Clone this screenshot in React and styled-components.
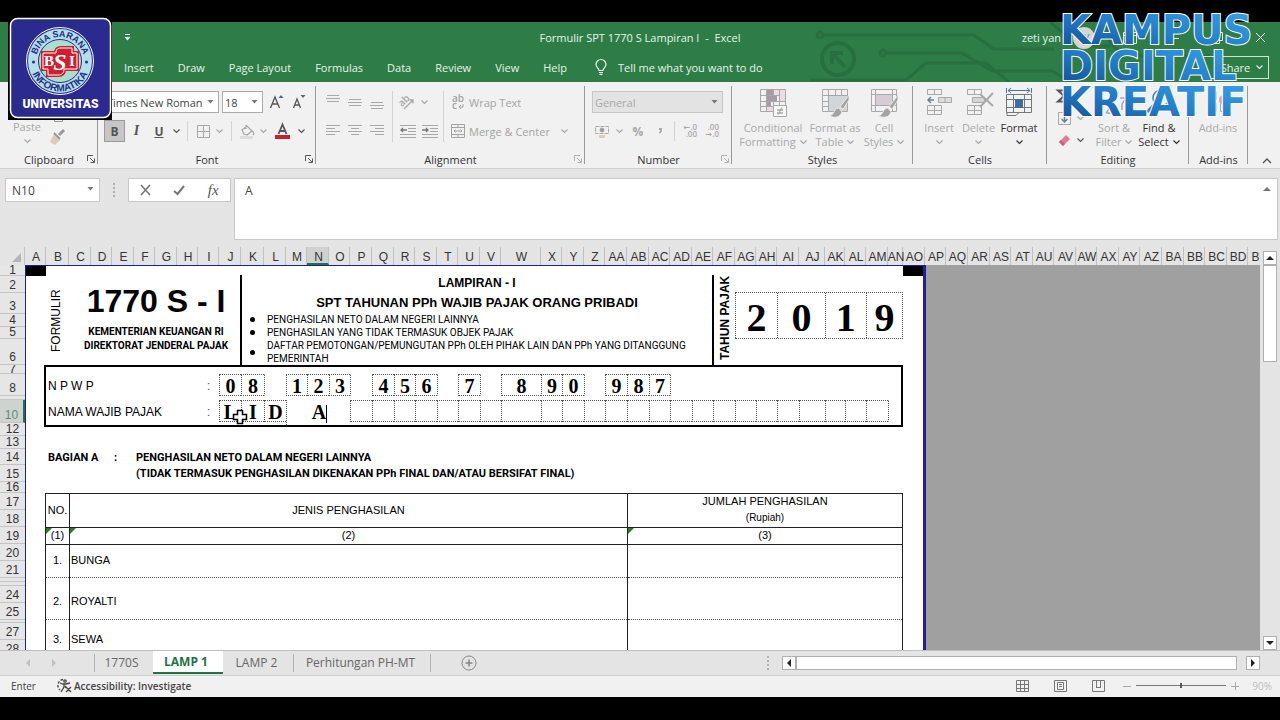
import React from "react";
import styled, { createGlobalStyle, css } from "styled-components";

const UI = `"Open Sans", "Noto Sans", sans-serif`;
const ARIAL = `"Liberation Sans", Arial, sans-serif`;
const SERIF = `"Liberation Serif", "Times New Roman", serif`;

const GlobalStyle = createGlobalStyle`
  *, *::before, *::after { box-sizing: border-box; }
  body { margin: 0; background: #000; font-family: ${UI}; font-size: 11px; color: #444; }
  button, input, select, textarea { font: inherit; color: inherit; margin: 0; }
  h1, h2, p, ul { margin: 0; padding: 0; }
`;

/* ---------- frame ---------- */
const Screen = styled.div`
  position: relative;
  display: flex;
  flex-direction: column;
  height: 100vh;
  padding: 22px 0 23px;
  background: #000;
  overflow: hidden;
`;
const plainButton = css`
  display: inline-flex;
  align-items: center;
  justify-content: center;
  padding: 0;
  border: 0;
  background: none;
`;
const IconButton = styled.button`
  ${plainButton}
  flex: none;
  width: ${(p) => p.$w || 22}px;
  height: 22px;
  color: ${(p) => (p.$on ? "#555" : "#a8a8a8")};
  font-size: 12px;
  ${(p) => p.$pressed && "background: #c6c6c6; border: 1px solid #9a9a9a;"}
`;

/* ---------- title bar ---------- */
const Header = styled.header`
  position: relative;
  flex: none;
  height: 60px;
  background: #2e7d47;
  color: #e6f3ea;
  overflow: hidden;
`;
const Circuit = styled.svg`
  position: absolute;
  top: 0;
  right: 0;
`;
const TitleBar = styled.div`
  position: relative;
  display: grid;
  grid-template-columns: 1fr auto 1fr;
  align-items: center;
  height: 31px;
`;
const QuickAccess = styled.div`
  padding-left: 116px;
`;
const QuickButton = styled(IconButton)`
  color: #e6f3ea;
`;
const DocTitle = styled.h1`
  font-size: 11px;
  font-weight: 400;
  white-space: pre;
`;
const Account = styled.div`
  display: flex;
  align-items: center;
  justify-content: flex-end;
  gap: 32px;
  padding-right: 14px;
`;
const Avatar = styled.span`
  flex: none;
  width: 22px;
  height: 22px;
  margin: 0 -4px 0 -20px;
  border-radius: 50%;
  background: #d5d5d5;
  color: #777;
  font-size: 10px;
  line-height: 22px;
  text-align: center;
`;
const TabBar = styled.nav`
  position: relative;
  display: flex;
  align-items: center;
  gap: 24px;
  height: 28px;
  padding: 0 11px 0 124px;
`;
const RibbonTab = styled.button`
  ${plainButton}
  white-space: nowrap;
`;
const TellMe = styled.button`
  ${plainButton}
  gap: 11px;
  margin-left: 4px;
  white-space: nowrap;
`;
const ShareButton = styled.button`
  ${plainButton}
  gap: 6px;
  width: 68px;
  height: 23px;
  padding-left: 14px;
  margin-left: auto;
  border: 1px solid #cfe5d6;
`;

/* ---------- ribbon ---------- */
const Ribbon = styled.section`
  display: flex;
  flex: none;
  height: 87px;
  background: #f1f1f1;
  border-bottom: 1px solid #d0d0d0;
`;
const Group = styled.div`
  position: relative;
  display: flex;
  flex: none;
  flex-direction: column;
  width: ${(p) => p.$w}px;
  &::after {
    content: "";
    position: absolute;
    top: 4px;
    bottom: 4px;
    right: 0;
    width: 1px;
    background: #999;
  }
`;
const GroupBody = styled.div`
  display: flex;
  height: 69px;
  padding: ${(p) => p.$pad || "9px 0 0 6px"};
`;
const GroupLabel = styled.div`
  position: relative;
  display: flex;
  align-items: center;
  justify-content: center;
  height: 16px;
  padding: 0 ${(p) => (p.$launch ? 18 : 0)}px;
  color: #333;
`;
const Launcher = styled.button`
  ${plainButton}
  position: absolute;
  right: 3px;
  top: 4px;
  color: ${(p) => (p.$on ? "#555" : "#b0b0b0")};
`;
const Stack = styled.div`
  display: flex;
  flex-direction: column;
  gap: ${(p) => (p.$tight ? 0 : 7)}px;
`;
const Row = styled.div`
  display: flex;
  align-items: center;
  gap: ${(p) => p.$gap || 0}px;
  height: 22px;
`;
const Sep = styled.span`
  flex: none;
  width: 1px;
  height: ${(p) => p.$h || 20}px;
  margin: 0 ${(p) => p.$m || 5}px;
  background: #d2d2d2;
`;
const SelectBox = styled.span`
  position: relative;
  display: inline-flex;
  width: ${(p) => p.$w}px;
  height: 22px;
  svg { position: absolute; right: 5px; top: 9px; pointer-events: none; }
`;
const Select = styled.select`
  appearance: none;
  width: 100%;
  padding: 0 2px;
  border: 1px solid ${(p) => (p.disabled ? "#c6c6c6" : "#ababab")};
  border-radius: 0;
  background: ${(p) => (p.disabled ? "#e3e3e3" : "#fff")};
  color: ${(p) => (p.disabled ? "#a8a8a8" : "#444")};
  opacity: 1;
`;
const TextTool = styled.button`
  ${plainButton}
  height: 22px;
  color: #a3a3a3;
  white-space: nowrap;
`;
const ToolIcon = styled.span`
  display: inline-flex;
  justify-content: center;
  width: 23px;
`;
const Big = styled.button`
  ${plainButton}
  flex: none;
  flex-direction: column;
  justify-content: flex-start;
  width: ${(p) => p.$w}px;
  padding-top: ${(p) => p.$top || 0}px;
  color: ${(p) => (p.$on ? "#333" : "#a8a8a8")};
  line-height: 14px;
  white-space: nowrap;
  > svg { flex: none; margin-bottom: 4px; }
`;
const BigLine = styled.span`
  display: inline-flex;
  align-items: center;
  justify-content: center;
  gap: 4px;
  min-height: 14px;
`;
const PasteColumn = styled.div`
  display: flex;
  align-items: flex-end;
  gap: 3px;
  padding: 0 0 3px 8px;
`;
const RibbonEnd = styled.div`
  display: flex;
  flex: 1;
  align-items: flex-end;
  justify-content: flex-end;
  padding: 0 7px 1px 0;
`;
const Collapse = styled(IconButton)`
  height: 12px;
`;
const Italic = styled.i`
  font: italic 700 14px ${SERIF};
`;
const FxLabel = styled.i`
  font: italic 400 15px ${SERIF};
`;

/* ---------- formula bar ---------- */
const FormulaBar = styled.section`
  display: flex;
  flex: none;
  align-items: flex-start;
  height: 78px;
  padding: 9px 2px 0 5px;
  background: #e4e4e4;
  font-size: 12px;
`;
const NameBox = styled.label`
  position: relative;
  display: flex;
  width: 95px;
  height: 24px;
  svg { position: absolute; right: 6px; top: 9px; }
`;
const NameInput = styled.input`
  width: 100%;
  padding: 0 6px;
  border: 1px solid #c8c8c8;
  background: #fff;
`;
const Dots = styled.span`
  width: 3px;
  height: 14px;
  margin: ${(p) => p.$m || "5px 12px 0 13px"};
  border-left: 2px dotted #b0b0b0;
`;
const FormulaButtons = styled.div`
  display: flex;
  align-items: center;
  justify-content: space-around;
  width: 103px;
  height: 24px;
  margin-right: 3px;
  border: 1px solid #c8c8c8;
  background: #fff;
`;
const FormulaInput = styled.textarea`
  flex: 1;
  height: 62px;
  padding: 3px 10px;
  border: 1px solid #c8c8c8;
  border-radius: 0;
  background: #fff;
  line-height: 17px;
  resize: none;
`;
const FormulaField = styled.label`
  position: relative;
  display: flex;
  flex: 1;
  svg { position: absolute; right: 6px; top: 9px; }
`;

/* ---------- workbook ---------- */
const Workbook = styled.main`
  display: flex;
  flex: 1;
  min-height: 0;
  background: #e4e4e4;
`;
const Pane = styled.div`
  display: flex;
  flex: 1;
  flex-direction: column;
  min-width: 0;
`;
const ColumnHeads = styled.div`
  display: flex;
  flex: none;
  height: 18px;
  overflow: hidden;
  font: 12px ${ARIAL};
  color: #333;
`;
const Corner = styled.span`
  display: flex;
  flex: none;
  align-items: flex-end;
  justify-content: flex-end;
  width: 25px;
  padding: 0 3px 3px 0;
  border-right: 1px solid #c4c4c4;
`;
const ColumnHead = styled.span`
  display: flex;
  flex: none;
  justify-content: center;
  width: ${(p) => p.$w}px;
  padding-left: 2px;
  border-right: 1px solid #c0c0c0;
  border-bottom: ${(p) => (p.$on ? "2px solid #217346" : "0")};
  background: ${(p) => (p.$on ? "#cfd3d0" : "transparent")};
  line-height: 20px;
  white-space: nowrap;
`;
const Viewport = styled.div`
  display: flex;
  flex: 1;
  align-items: flex-start;
  min-height: 0;
  overflow: hidden;
  background: #a0a0a0;
`;
const RowHeads = styled.div`
  flex: none;
  width: 25px;
  background: #e6e6e6;
  font: 12px ${ARIAL};
  color: #333;
`;
const RowHead = styled.div`
  display: flex;
  align-items: flex-end;
  justify-content: center;
  height: ${(p) => p.$h}px;
  border-bottom: 1px solid #c4c4c4;
  border-right: ${(p) => (p.$on ? "2px solid #217346" : "0")};
  background: ${(p) => (p.$on ? "#cfd3d0" : "transparent")};
  color: ${(p) => (p.$on ? "#5f8a70" : "inherit")};
  line-height: ${(p) => Math.min(14, p.$h - 1)}px;
  overflow: hidden;
`;
const Paper = styled.div`
  flex: none;
  width: 901px;
  border: solid #1f1f9c;
  border-width: 1px 3px 0 1px;
  background: #fff;
  color: #000;
  font-family: ${ARIAL};
`;
const Marks = styled.div`
  display: flex;
  justify-content: space-between;
  height: 9px;
  &::before, &::after { content: ""; width: 20px; height: 10px; background: #000; }
`;
const PaperBody = styled.div`
  margin: 0 20px 0 18px;
`;
const FormHeader = styled.div`
  display: grid;
  grid-template-columns: 196px 472px 1fr;
  height: 90px;
`;
const FormCode = styled.div`
  display: grid;
  grid-template-columns: 24px 1fr;
  text-align: center;
`;
const Vertical = styled.span`
  display: flex;
  align-items: center;
  justify-content: center;
  padding-bottom: ${(p) => (p.$bold ? 0 : 1)}px;
  padding-top: ${(p) => (p.$bold ? 4 : 0)}px;
  writing-mode: vertical-rl;
  transform: rotate(180deg);
  font-size: ${(p) => p.$fs}px;
  font-weight: ${(p) => (p.$bold ? 700 : 400)};
`;
const CodeText = styled.div`
  padding: 8px 0 0 4px;
  font: 700 10px/14px Roboto, ${ARIAL};
  white-space: nowrap;
`;
const CodeNumber = styled.div`
  margin-bottom: 6px;
  font: 700 32px/36px ${ARIAL};
`;
const FormTitle = styled.div`
  border-left: 2px solid #000;
`;
const TitleLine = styled.h2`
  font-size: ${(p) => p.$fs}px;
  line-height: ${(p) => p.$lh}px;
  text-align: center;
`;
const Bullets = styled.ul`
  padding-left: 8px;
  list-style: none;
  font: 10px/13px Roboto, ${ARIAL};
`;
const Bullet = styled.li`
  display: flex;
  align-items: center;
  gap: 12px;
  white-space: pre-line;
  &::before { content: ""; flex: none; width: 5px; height: 5px; border-radius: 50%; background: #000; }
`;
const YearBlock = styled.div`
  display: grid;
  grid-template-columns: 21px 1fr;
  border-left: 2px solid #000;
`;
const dotted = "1px dotted #555";
const YearBoxes = styled.div`
  display: flex;
  height: 47px;
  margin-top: 17px;
  border: ${dotted};
  border-left: 0;
`;
const YearDigit = styled.span`
  flex: ${(p) => p.$w} 1 0;
  border-left: ${dotted};
  font: 700 40px/50px ${SERIF};
  text-align: center;
`;
const Identity = styled.div`
  padding: 7px 0 3px;
  border: 2px solid #000;
`;
const IdRow = styled.div`
  display: flex;
  height: 22px;
  margin-bottom: ${(p) => (p.$last ? 0 : 4)}px;
  font-size: 12px;
  line-height: 24px;
`;
const IdLabel = styled.span`
  flex: none;
  width: 161px;
  padding-left: 2px;
`;
const Colon = styled.span`
  flex: none;
  width: 12px;
  color: #555;
`;
const Cell = styled.span`
  position: relative;
  flex: none;
  width: ${(p) => p.$w}px;
  border: ${(p) => (p.$box ? dotted : "1px solid transparent")};
  border-left: ${(p) => (p.$box || p.$after ? dotted : "1px solid transparent")};
  border-right: 0;
  font: 700 20px/22px ${SERIF};
  text-align: center;
`;
const EditCell = styled.span`
  flex: none;
  width: 64px;
  height: 25px;
  padding-left: 2px;
  border-left: ${dotted};
  background: #fff;
  font: 700 20px/24px ${SERIF};
  text-align: center;
`;
const Caret = styled.span`
  display: inline-block;
  width: 1px;
  height: 18px;
  background: #000;
  vertical-align: -4px;
`;
const CrossCursor = styled.svg`
  position: absolute;
  left: -10px;
  top: 8px;
`;
const Section = styled.div`
  display: grid;
  grid-template-columns: 66px 22px auto;
  justify-content: start;
  padding: 23px 0 11px 4px;
  font: 700 11px/16px Roboto, ${ARIAL};
`;
const IncomeTable = styled.table`
  width: calc(100% - 1px);
  margin-left: 1px;
  border-collapse: collapse;
  table-layout: fixed;
  font-size: 11px;
`;
const NoCol = styled.col`
  width: 24px;
`;
const KindCol = styled.col`
  width: 558px;
`;
const Tr = styled.tr`
  height: ${(p) => p.$h}px;
`;
const Td = styled.td`
  position: relative;
  padding: ${(p) => p.$top || 0}px 1px ${(p) => (p.$top ? 0 : 1)}px 1px;
  border: 1px solid #222;
  ${(p) => p.$softTop && `border-top: ${dotted};`}
  ${(p) => p.$softBottom && `border-bottom: ${dotted};`}
  font-weight: 400;
  line-height: 15px;
  text-align: ${(p) => (p.$left ? "left" : "center")};
  ${(p) =>
    p.$flag &&
    `&::before { content: ""; position: absolute; left: 0; top: 0; border-top: 6px solid #2c7a2c; border-right: 6px solid transparent; }`}
`;
const Small = styled.div`
  font-size: 10px;
  line-height: 17px;
`;

/* ---------- scroll bars, sheet tabs, status ---------- */
const VScroll = styled.div`
  display: flex;
  flex: none;
  flex-direction: column;
  width: 20px;
  padding: 4px 3px 0;
`;
const ScrollButton = styled.button`
  ${plainButton}
  flex: none;
  width: 14px;
  height: 14px;
  border: 1px solid #b0b0b0;
  background: #fff;
  color: #222;
`;
const VThumb = styled.div`
  flex: none;
  height: 97px;
  border: 1px solid #b0b0b0;
  background: #fff;
`;
const Fill = styled.div`
  flex: 1;
`;
const SheetBar = styled.footer`
  display: flex;
  flex: none;
  align-items: center;
  height: 26px;
  padding-right: 20px;
  border-top: 1px solid #c0c0c0;
  border-bottom: 1px solid #d0d0d0;
  background: #e4e4e4;
`;
const SheetNav = styled.div`
  display: flex;
  gap: 18px;
  width: 94px;
  padding-left: 24px;
`;
const SheetTab = styled.button`
  ${plainButton}
  align-self: flex-start;
  width: ${(p) => p.$w}px;
  height: 23px;
  padding-right: 4px;
  font-size: 12px;
  color: #666;
  white-space: nowrap;
  background:
    linear-gradient(#b0b0b0, #b0b0b0) left / ${(p) => (p.$start ? 1 : 0)}px 18px no-repeat,
    linear-gradient(#b0b0b0, #b0b0b0) right / ${(p) => (p.$end ? 1 : 0)}px 18px no-repeat;
  ${(p) => p.$on && "background: #fff; color: #217346; font-weight: 700; border-bottom: 2px solid #217346;"}
`;
const HScroll = styled.div`
  display: flex;
  width: 478px;
`;
const HThumb = styled.div`
  width: 441px;
  height: 14px;
  border: 1px solid #b0b0b0;
  background: #fff;
`;
const StatusBar = styled.div`
  display: flex;
  flex: none;
  align-items: center;
  height: 21px;
  padding: 0 8px 2px 11px;
  background: #f1f1f1;
  font-size: 10px;
`;
const Access = styled.button`
  ${plainButton}
  gap: 3px;
  margin: 0 auto 0 20px;
  font-weight: 600;
`;
const Views = styled.div`
  display: flex;
  gap: 25px;
  margin-right: 18px;
`;
const ZoomTool = styled.div`
  display: flex;
  align-items: center;
  gap: 5px;
  color: #a8a8a8;
`;
const Slider = styled.input`
  appearance: none;
  width: 90px;
  height: 10px;
  background: linear-gradient(#777, #777) center / 100% 1px no-repeat;
  &::-webkit-slider-thumb { appearance: none; width: 2px; height: 5px; background: #555; }
`;
const Zoom = styled.span`
  width: 24px;
  margin-left: 4px;
  text-align: right;
  color: #bdbdbd;
`;

/* ---------- overlays ---------- */
const Badge = styled.svg`
  position: absolute;
  left: 8px;
  top: 17px;
`;
const Brand = styled.svg`
  position: absolute;
  right: 12px;
  top: 10px;
  overflow: visible;
`;

/* ---------- icons ---------- */
const IconSvg = styled.svg`
  overflow: visible;
`;
const Svg = ({ w = 16, h = 16, sw = 1, children, ...rest }) => (
  <IconSvg width={w} height={h} viewBox={`0 0 ${w} ${h}`} fill="none" stroke="currentColor" strokeWidth={sw} aria-hidden="true" {...rest}>
    {children}
  </IconSvg>
);
const Chev = () => <Svg w={7} h={4} sw={1.2}><path d="M.5.5l3 3 3-3" /></Svg>;
const Tri = () => <Svg w={7} h={4} stroke="none"><path d="M.5 0h6l-3 3.500z" fill="#777" /></Svg>;
const Launch = () => (
  <Svg w={8} h={8}><path d="M.5 6V.5H6M3 3l4 4M7.500 3.500v4h-4" /></Svg>
);
const Lines = ({ at, y = 3 }) => (
  <Svg w={14} h={16}>
    {at.map(([x, w], i) => <path key={i} d={`M${x} ${y + i * 3 + 0.5}h${w}`} />)}
  </Svg>
);
const Indent = ({ right }) => (
  <Svg>
    <path d="M0 2.500h16M8 5.500h8M8 8.500h8M0 11.500h16M0 14.500h16" />
    <path d={right ? "M0 7h6M4 5l2 2-2 2" : "M7 7H1M3 5L1 7l2 2"} stroke="#777" strokeWidth="1.300" />
  </Svg>
);
const GridIcon = ({ children }) => (
  <Svg w={28} h={29}>
    <path d="M1.500 1.500h25v22h-25zM1.500 7.500h25M1.500 13.500h25M1.500 18.500h25M7.500 1.500v22M14.500 1.500v22M20.500 1.500v22" />
    {children}
  </Svg>
);
const Brush = () => (
  <g>
    <path d="M28 7l-9 12 3 2 6-9z" fill="#a3a3a3" stroke="#f1f1f1" strokeWidth=".8" />
    <path d="M18 20c-3 0-4 2-5 4s-3 4-5 4c5 2 11 2 13-4z" fill="#a3a3a3" stroke="#f1f1f1" strokeWidth=".8" />
  </g>
);
const CellsIcon = ({ del }) => (
  <Svg w={28} h={29}>
    <path d="M2.500 1.500h14v5h-14zM9.500 1.500v5M2.500 17.500h14v9h-14zM9.500 17.500v9M2.500 22.500h14" />
    {del ? (
      <>
        <path d="M7.500 9.500h12v5h-12z" fill="#d5d5d5" />
        <path d="M15 6l13 12M28 5L15 19" strokeWidth="2" />
      </>
    ) : (
      <>
        <path d="M13.500 9.500h13v5h-13zM20 9.500v5" fill="#ddd" />
        <path d="M9 12H3M6 9l-3 3 3 3" stroke="#71808c" strokeWidth="1.500" />
      </>
    )}
  </Svg>
);
const glyph = { fontFamily: "Open Sans, DejaVu Sans", fontWeight: 600, fill: "currentColor", stroke: "none" };

/* ---------- data ---------- */
const COLUMNS = [
  ["A", 21], ["B", 23], ["C", 22], ["D", 21], ["E", 22], ["F", 21], ["G", 22], ["H", 21], ["I", 21],
  ["J", 22], ["K", 23], ["L", 22], ["M", 21], ["N", 22], ["O", 21], ["P", 22], ["Q", 22], ["R", 21],
  ["S", 22], ["T", 21], ["U", 22], ["V", 21], ["W", 40], ["X", 21], ["Y", 22], ["Z", 21], ["AA", 22],
  ["AB", 22], ["AC", 21], ["AD", 22], ["AE", 21], ["AF", 22], ["AG", 21], ["AH", 21], ["AI", 22],
  ["AJ", 26], ["AK", 20], ["AL", 21], ["AM", 22], ["AN", 15], ["AO", 22], ["AP", 21], ["AQ", 22],
  ["AR", 22], ["AS", 21], ["AT", 22], ["AU", 21], ["AV", 22], ["AW", 21], ["AX", 22], ["AY", 21],
  ["AZ", 22], ["BA", 22], ["BB", 21], ["BC", 22], ["BD", 21], ["B", 14],
];
const ROWS = [
  ["1", 11], ["2", 17], ["3", 21], ["4", 13], ["5", 12], ["6", 26], ["7", 9], ["8", 22], ["", 4],
  ["10", 23], ["12", 13], ["13", 13], ["14", 16], ["15", 17], ["16", 11], ["17", 17], ["18", 17],
  ["19", 17], ["20", 17], ["21", 17], ["", 4], ["", 4], ["24", 17], ["25", 17], ["", 3], ["27", 17], ["28", 17],
];
const NPWP = { J: "0", K: "8", M: "1", N: "2", O: "3", Q: "4", R: "5", S: "6", U: "7", W: "8", X: "9", Y: "0", AA: "9", AB: "8", AC: "7" };
const ENTRY = COLUMNS.slice(9, 39);
const TABS = ["Insert", "Draw", "Page Layout", "Formulas", "Data", "Review", "View", "Help"];
const YEAR = [["2", 42], ["0", 48], ["1", 41], ["9", 36]];
const INCOME = [["1.", "BUNGA", 33, 0], ["2.", "ROYALTI", 42, 5], ["3.", "SEWA", 38, 1]];

const NpwpCells = () =>
  ENTRY.map(([name, w], i) => (
    <Cell key={name} $w={w} $box={NPWP[name]} $after={i > 0 && NPWP[ENTRY[i - 1][0]]}>
      {NPWP[name]}
    </Cell>
  ));

const NameCells = () => (
  <>
    {ENTRY.slice(0, 3).map(([name, w], i) => (
      <Cell key={name} $w={w} $box>
        {"LID"[i]}
        {i === 1 && (
          <CrossCursor width="16" height="16" viewBox="0 0 16 16">
            <path d="M5.500 1.500h5v4h4v5h-4v4h-5v-4h-4v-5h4z" fill="#fff" stroke="#000" strokeWidth="1.500" />
          </CrossCursor>
        )}
      </Cell>
    ))}
    <EditCell>A<Caret /></EditCell>
    {ENTRY.slice(6).map(([name, w]) => <Cell key={name} $w={w} $box />)}
    <Cell $w={1} $after />
  </>
);

const Sheet = () => (
  <Paper>
    <Marks />
    <PaperBody>
      <FormHeader>
        <FormCode>
          <Vertical $fs={12}>FORMULIR</Vertical>
          <CodeText>
            <CodeNumber>1770 S - I</CodeNumber>
            <p>KEMENTERIAN KEUANGAN RI</p>
            <p>DIREKTORAT JENDERAL PAJAK</p>
          </CodeText>
        </FormCode>
        <FormTitle>
          <TitleLine $fs={12} $lh={17}>LAMPIRAN - I</TitleLine>
          <TitleLine $fs={13} $lh={21}>SPT TAHUNAN PPh WAJIB PAJAK ORANG PRIBADI</TitleLine>
          <Bullets>
            <Bullet>PENGHASILAN NETO DALAM NEGERI LAINNYA</Bullet>
            <Bullet>PENGHASILAN YANG TIDAK TERMASUK OBJEK PAJAK</Bullet>
            <Bullet>{"DAFTAR PEMOTONGAN/PEMUNGUTAN PPh OLEH PIHAK LAIN DAN PPh YANG DITANGGUNG\nPEMERINTAH"}</Bullet>
          </Bullets>
        </FormTitle>
        <YearBlock>
          <Vertical $fs={12} $bold>TAHUN PAJAK</Vertical>
          <YearBoxes>
            {YEAR.map(([d, w]) => <YearDigit key={d} $w={w}>{d}</YearDigit>)}
          </YearBoxes>
        </YearBlock>
      </FormHeader>
      <Identity>
        <IdRow>
          <IdLabel>N P W P</IdLabel>
          <Colon>:</Colon>
          <NpwpCells />
        </IdRow>
        <IdRow $last>
          <IdLabel>NAMA WAJIB PAJAK</IdLabel>
          <Colon>:</Colon>
          <NameCells />
        </IdRow>
      </Identity>
      <Section>
        <span>BAGIAN A</span>
        <span>:</span>
        <div>
          <p>PENGHASILAN NETO DALAM NEGERI LAINNYA</p>
          <p>(TIDAK TERMASUK PENGHASILAN DIKENAKAN PPh FINAL DAN/ATAU BERSIFAT FINAL)</p>
        </div>
      </Section>
      <IncomeTable>
        <colgroup>
          <NoCol />
          <KindCol />
          <col />
        </colgroup>
        <thead>
          <Tr $h={34}>
            <Td as="th">NO.</Td>
            <Td as="th">JENIS PENGHASILAN</Td>
            <Td as="th">JUMLAH PENGHASILAN<Small>(Rupiah)</Small></Td>
          </Tr>
          <Tr $h={17}>
            <Td $flag>(1)</Td>
            <Td $flag>(2)</Td>
            <Td $flag>(3)</Td>
          </Tr>
        </thead>
        <tbody>
          {INCOME.map(([n, t, h, top], i) => (
            <Tr key={n} $h={h}>
              <Td $softTop={i > 0} $softBottom $top={top}>{n}</Td>
              <Td $softTop={i > 0} $softBottom $top={top} $left>{t}</Td>
              <Td $softTop={i > 0} $softBottom />
            </Tr>
          ))}
        </tbody>
      </IncomeTable>
    </PaperBody>
  </Paper>
);

const RibbonGroup = ({ w, label, launch, on, pad, children }) => (
  <Group $w={w}>
    <GroupBody $pad={pad}>{children}</GroupBody>
    <GroupLabel $launch={launch}>
      {label}
      {launch && <Launcher $on={on} aria-label={`${label} settings`}><Launch /></Launcher>}
    </GroupLabel>
  </Group>
);

const RibbonBar = () => (
  <Ribbon>
    <RibbonGroup w={98} label="Clipboard" launch on pad="0">
      <PasteColumn>
        <Big $w={38}>
          <BigLine>Paste</BigLine>
          <BigLine><Chev /></BigLine>
        </Big>
        <Svg w={14} h={30} stroke="#999">
          <path d="M5.500 0v3.500h8V0" />
          <path d="M15 12l-5 5" strokeWidth="3" />
          <path d="M5 16l6 6-5 5-5-3z" fill="#dccbb8" stroke="none" />
          <path d="M5 15l6 6" strokeWidth="2" />
        </Svg>
      </PasteColumn>
    </RibbonGroup>

    <RibbonGroup w={218} label="Font" launch on>
      <Stack>
        <Row $gap={3}>
          <SelectBox $w={115}>
            <Select aria-label="Font" defaultValue="t"><option value="t">Times New Roman</option></Select>
            <Tri />
          </SelectBox>
          <SelectBox $w={41}>
            <Select aria-label="Font size" defaultValue="18"><option>18</option></Select>
            <Tri />
          </SelectBox>
          <Row>
            <IconButton $on aria-label="Increase font size">
              <Svg><path d="M1.500 14L6 3l4.500 11M3 10h6" strokeWidth="1.300" /><path d="M9.500 4L12 1l2.500 3z" fill="#4a6a86" stroke="none" /></Svg>
            </IconButton>
            <IconButton $on aria-label="Decrease font size">
              <Svg><path d="M2.500 14L6 5l3.500 9M4 11h4.500" strokeWidth="1.300" /><path d="M9.500 1h5L12 4z" fill="#4a6a86" stroke="none" /></Svg>
            </IconButton>
          </Row>
        </Row>
        <Row>
          <IconButton $on $pressed $w={21}><b>B</b></IconButton>
          <IconButton $on $w={23}><Italic>I</Italic></IconButton>
          <IconButton $on><b><u>U</u></b></IconButton>
          <IconButton $on $w={12} aria-label="Underline style"><Chev /></IconButton>
          <Sep />
          <IconButton $w={20} aria-label="Borders">
            <Svg w={13} h={13}><path d="M.5.5h12v12H.5zM6.500 0v13M0 6.500h13" /></Svg>
          </IconButton>
          <IconButton $w={13} aria-label="Border style"><Chev /></IconButton>
          <Sep />
          <IconButton $w={20} aria-label="Fill colour">
            <Svg w={16} h={15}><path d="M3 6l5-4 5 5-5 4-3-1zM7 5V1M13 7c2 1 2 3 1 4" strokeWidth="1.300" /><path d="M1 12h13v3H1z" fill="#ddd" stroke="none" /></Svg>
          </IconButton>
          <IconButton $w={12} aria-label="Fill options"><Chev /></IconButton>
          <IconButton $on $w={26} aria-label="Font colour">
            <Svg w={15} h={16}><path d="M3.500 11L7.500 1.500 11.500 11M5 8h5" strokeWidth="1.800" /><path d="M0 12h15v4H0z" fill="#c8202f" stroke="none" /></Svg>
          </IconButton>
          <IconButton $on $w={12} aria-label="Font colour options"><Chev /></IconButton>
        </Row>
      </Stack>
    </RibbonGroup>

    <RibbonGroup w={269} label="Alignment" launch>
      <Stack>
        <Row>
          <IconButton aria-label="Top align"><Lines y={1} at={[[1, 12], [0, 14], [1, 12]]} /></IconButton>
          <IconButton aria-label="Middle align"><Lines y={5} at={[[1, 12], [0, 14], [1, 12]]} /></IconButton>
          <IconButton aria-label="Bottom align"><Lines y={8} at={[[1, 12], [0, 14], [1, 12]]} /></IconButton>
        </Row>
        <Row>
          <IconButton aria-label="Align left"><Lines y={2} at={[[0, 14], [0, 9], [0, 14], [0, 9]]} /></IconButton>
          <IconButton aria-label="Center"><Lines y={2} at={[[0, 14], [3, 8], [0, 14], [3, 8]]} /></IconButton>
          <IconButton aria-label="Align right"><Lines y={2} at={[[0, 14], [5, 9], [0, 14], [5, 9]]} /></IconButton>
        </Row>
      </Stack>
      <Sep $h={51} $m={4} />
      <Stack>
        <Row>
          <IconButton $w={20} aria-label="Orientation">
            <Svg><text x="-1" y="10" fontSize="10" {...glyph} transform="rotate(-45 5 7)">ab</text><path d="M5 15L14 6M10.500 6H14v3.500" strokeWidth="1.300" /></Svg>
          </IconButton>
          <IconButton $w={14} aria-label="Orientation options"><Chev /></IconButton>
        </Row>
        <Row>
          <IconButton aria-label="Decrease indent"><Indent /></IconButton>
          <IconButton aria-label="Increase indent"><Indent right /></IconButton>
        </Row>
      </Stack>
      <Sep $h={51} $m={2} />
      <Stack>
        <Row>
          <TextTool>
            <ToolIcon>
              <Svg w={12} h={16}><text x="0" y="8" fontSize="10" {...glyph}>ab</text><text x="0" y="15" fontSize="10" {...glyph}>c</text><path d="M11 10v3H7M9 11l-2 2 2 2" /></Svg>
            </ToolIcon>
            Wrap Text
          </TextTool>
        </Row>
        <Row>
          <TextTool>
            <ToolIcon>
              <Svg w={14} h={14}><path d="M.5.5h13v13H.5zM.5 3.500h13M.5 10.500h13M7 0v3.500M7 10.500V14M3 7h8M4.500 5.500L3 7l1.500 1.500M9.500 5.500L11 7 9.500 8.500" /></Svg>
            </ToolIcon>
            Merge &amp; Center
          </TextTool>
          <IconButton $w={30} aria-label="Merge options"><Chev /></IconButton>
        </Row>
      </Stack>
    </RibbonGroup>

    <RibbonGroup w={147} label="Number" launch pad="9px 0 0 7px">
      <Stack>
        <SelectBox $w={131}>
          <Select disabled aria-label="Number format"><option>General</option></Select>
          <Tri />
        </SelectBox>
        <Row>
          <IconButton $w={20} aria-label="Currency">
            <Svg w={16} h={15}><path d="M1.500 2.500h13v7h-13z" strokeDasharray="4 1" /><circle cx="8" cy="6" r="2" fill="#999" /><path d="M5 11h6v3H5z" fill="#e0cdb8" stroke="none" /></Svg>
          </IconButton>
          <IconButton $w={14} aria-label="Currency options"><Chev /></IconButton>
          <IconButton $w={24}><b>%</b></IconButton>
          <IconButton $w={20} aria-label="Comma style"><Svg w={4} h={6}><path d="M1 1h2v2L1.500 5" strokeWidth="1.800" /></Svg></IconButton>
          <Sep $m={4} />
          {[["←.0", ".00"], [".00", "→.0"]].map((pair) => (
            <IconButton key={pair[0]} aria-label="Decimals">
              <Svg w={16} h={16}>
                {pair.map((s, i) => (
                  <text key={s} x="15" y={7 + i * 7} textAnchor="end" fontSize="8" {...glyph}>{s}</text>
                ))}
              </Svg>
            </IconButton>
          ))}
        </Row>
      </Stack>
    </RibbonGroup>

    <RibbonGroup w={181} label="Styles" pad="6px 0 0 6px">
      <Big $w={70}>
        <GridIcon>
          <path d="M8 2h6v5H8zM8 8h10v5H8zM8 14h4v4H8z" fill="#a79aa5" stroke="none" />
          <path d="M15 2h5v5h-5zM21 2h5v11h-5zM8 19h6v4H8z" fill="#eadce6" stroke="none" />
          <path d="M14.500 17.500h13v11h-13z" fill="#f7f7f7" />
          <path d="M18 22h6M18 25h6M23 19.500l-4 7" strokeWidth="1.300" />
        </GridIcon>
        <BigLine>Conditional</BigLine>
        <BigLine>Formatting <Chev /></BigLine>
      </Big>
      <Big $w={54}>
        <GridIcon><path d="M8 8h18v15H8z" fill="#d3d6d9" stroke="none" /><Brush /></GridIcon>
        <BigLine>Format as</BigLine>
        <BigLine>Table <Chev /></BigLine>
      </Big>
      <Big $w={44}>
        <Svg w={28} h={29}>
          <path d="M1.500 1.500h25v22h-25zM1.500 6.500h25M1.500 17.500h25M5.500 1.500v22M22.500 1.500v22" />
          <path d="M6 7h16v10H6z" fill="#d6ccd5" stroke="none" />
          <Brush />
        </Svg>
        <BigLine>Cell</BigLine>
        <BigLine>Styles <Chev /></BigLine>
      </Big>
    </RibbonGroup>

    <RibbonGroup w={134} label="Cells" pad="6px 0 0 6px">
      <Big $w={40}><CellsIcon /><BigLine>Insert</BigLine><BigLine><Chev /></BigLine></Big>
      <Big $w={39}><CellsIcon del /><BigLine>Delete</BigLine><BigLine><Chev /></BigLine></Big>
      <Big $w={42} $on>
        <Svg w={28} h={29} stroke="#777">
          <path d="M1.500 6.500h25v18h-25zM1.500 11.500h25M1.500 19.500h25M8.500 6.500v18M19.500 6.500v18M2 24.500v3h9l3-3" />
          <path d="M10 11h8v9h-8z" fill="#3b6f9e" stroke="none" />
          <path d="M3 2.500h22M6 0L3 2.500 6 5M22 0l3 2.500L22 5M1.500 0v5M26.500 0v5" stroke="#44779f" />
        </Svg>
        <BigLine>Format</BigLine>
        <BigLine><Chev /></BigLine>
      </Big>
    </RibbonGroup>

    <RibbonGroup w={142} label="Editing" pad="3px 0 0 5px">
      <Stack $tight>
        <Row><IconButton $on aria-label="AutoSum"><Svg w={14} h={14}><path d="M12 4V1.500H2L8 7l-6 5.500h10V10" strokeWidth="2" /></Svg></IconButton></Row>
        <Row>
          <IconButton $w={24} aria-label="Fill"><Svg w={13} h={13}><path d="M.5.5h12v12H.5z" /><path d="M6.500 2v8M3.500 7l3 3 3-3" stroke="#6c7f90" strokeWidth="1.500" /></Svg></IconButton>
          <IconButton $w={8} aria-label="Fill options"><Chev /></IconButton>
        </Row>
        <Row>
          <IconButton $w={24} aria-label="Clear"><Svg w={13} h={13} stroke="none"><path d="M1 8l7-7 4 4-7 7z" fill="#e27a98" /><path d="M1 8l2-2 4 4-2 2z" fill="#c8607f" /></Svg></IconButton>
          <IconButton $on $w={8} aria-label="Clear options"><Chev /></IconButton>
        </Row>
      </Stack>
      <Big $w={60} $top={3}>
        <Svg w={28} h={29}><path d="M6 25h8M6 25l7-9H6M16 4l-3 9M20 10h6l-4 6v6" strokeWidth="1.500" /></Svg>
        <BigLine>Sort &amp;</BigLine>
        <BigLine>Filter <Chev /></BigLine>
      </Big>
      <Big $w={30} $on $top={3}>
        <Svg w={28} h={29} stroke="#4a7ca8"><circle cx="16" cy="10" r="8" strokeWidth="1.500" /><path d="M10 16l-8 8" strokeWidth="3" /></Svg>
        <BigLine>Find &amp;</BigLine>
        <BigLine>Select <Chev /></BigLine>
      </Big>
    </RibbonGroup>

    <RibbonGroup w={59} label="Add-ins" pad="6px 0 0 0">
      <Big $w={58}>
        <Svg w={28} h={29}><path d="M4.500 3.500h8v8h-8zM4.500 15.500h8v8h-8zM16.500 15.500h8v8h-8z" /><circle cx="20" cy="12" r="5" fill="#d8a9a0" stroke="none" /></Svg>
        <BigLine>Add-ins</BigLine>
      </Big>
    </RibbonGroup>
    <RibbonEnd><Collapse $on $w={12} aria-label="Collapse ribbon"><Svg w={10} h={6} sw={1.4}><path d="M1 5l4-4 4 4" /></Svg></Collapse></RibbonEnd>
  </Ribbon>
);

const UniversityBadge = () => (
  <Badge width="104" height="103" viewBox="0 0 104 103" role="img">
    <path d="M0 1h104v102H0z" fill="#000" />
    <rect x="2.500" y="1.500" width="100" height="99" rx="7" fill="#2b2b8f" stroke="#fff" strokeWidth="1.500" />
    <circle cx="52" cy="44" r="33.500" fill="#2b2b8f" stroke="#fff" />
    <circle cx="52" cy="44" r="32" fill="#b5dfe8" />
    <circle cx="52" cy="44" r="21.500" fill="#a9e0cd" stroke="#2b2b8f" />
    <defs>
      <path id="ringTop" d="M28 44a24 24 0 0 1 48 0" />
      <path id="ringBottom" d="M21.500 44a30.500 30.500 0 0 0 61 0" />
    </defs>
    <g fontFamily="Liberation Sans" fontWeight="700" fill="#22308a" textAnchor="middle">
      <text fontSize="9"><textPath href="#ringTop" startOffset="50%">BINA SARANA</textPath></text>
      <text fontSize="10"><textPath href="#ringBottom" startOffset="50%">INFORMATIKA</textPath></text>
    </g>
    <circle cx="25.500" cy="45" r="1.500" fill="#22308a" />
    <circle cx="78.500" cy="45" r="1.500" fill="#22308a" />
    <path d="M35 36h13c0-4 2-5 5-5h11v5h5v16H56c0 4-2 6-6 6H40v-6h-5z" fill="none" stroke="#c9202f" strokeWidth="4" />
    <path d="M35 36h13c0-4 2-5 5-5h11v5h5v16H56c0 4-2 6-6 6H40v-6h-5z" fill="#d01f30" stroke="#fff" />
    <g fontFamily="Liberation Serif" fontWeight="700" fill="#fff" textAnchor="middle">
      <text x="41" y="49" fontSize="15">B</text>
      <text x="52" y="53" fontSize="24" fontStyle="italic">S</text>
      <text x="64" y="49" fontSize="15">I</text>
    </g>
    <text x="52.500" y="91" textAnchor="middle" fontFamily="Roboto" fontWeight="900" fontSize="12" fill="#fff">UNIVERSITAS</text>
  </Badge>
);

const BrandLogo = () => (
  <Brand width="208" height="110" viewBox="0 0 208 110" role="img">
    <defs>
      <linearGradient id="brandFill" x1="0" y1="1" x2="1" y2="0">
        <stop offset="0" stopColor="#0f4d92" />
        <stop offset=".5" stopColor="#2580cc" />
        <stop offset="1" stopColor="#38a3ea" />
      </linearGradient>
    </defs>
    <g fontFamily="DejaVu Sans" fontWeight="700" fontSize="40" fill="url(#brandFill)" stroke="#fff" strokeWidth="2" paintOrder="stroke">
      <text x="0" y="34">KAMPUS</text>
      <text x="0" y="70">DIGITAL</text>
      <text x="0" y="106">KREATIF</text>
    </g>
  </Brand>
);

export default function App() {
  return (
    <Screen>
      <GlobalStyle />
      <Header>
        <Circuit width="470" height="60" viewBox="0 0 470 60" fill="none" stroke="#286f3f" strokeWidth="3">
          <circle cx="10" cy="13" r="3" /><path d="M14 13h150l20 14h60" />
          <circle cx="28" cy="37" r="16" strokeWidth="4" /><path d="M35 45L23 32M22 42V31h11" strokeWidth="4" />
          <circle cx="73" cy="31" r="3" /><path d="M77 31h75l30 18h60l20 12" />
          <path d="M0 58h96l20-17h60l24 20M240 0l30 24h30M300 0c-10 30 20 34 40 34h60" />
        </Circuit>
        <TitleBar>
          <QuickAccess>
            <QuickButton aria-label="Customize toolbar"><Svg w={7} h={7}><path d="M1 .5h5" /><path d="M.5 3h6l-3 3.500z" fill="currentColor" stroke="none" /></Svg></QuickButton>
          </QuickAccess>
          <DocTitle>{"Formulir SPT 1770 S Lampiran I  -  Excel"}</DocTitle>
          <Account>
            <span>zeti yan</span>
            <Avatar>ZY</Avatar>
            <Svg w={14} h={12}><path d="M.5.5h13v11H.5zM.5 3.500h13M7 10V5M5 7l2-2 2 2" /></Svg>
            <Svg w={10} h={12}><path d="M0 6.500h10" /></Svg>
            <Svg w={12} h={12}><path d="M.5 3.500h8v8h-8zM3.500 3V.5h8v8H9" /></Svg>
            <Svg w={11} h={11}><path d="M1 1l9 9M10 1l-9 9" /></Svg>
          </Account>
        </TitleBar>
        <TabBar>
          {TABS.map((t) => <RibbonTab key={t}>{t}</RibbonTab>)}
          <TellMe>
            <Svg w={12} h={16} sw={1.2}><path d="M4 11.500C4 9 1 8.500 1 5.500a5 5 0 0 1 10 0c0 3-3 3.500-3 6zM4 13.500h4M4.500 15.300h3" /></Svg>
            Tell me what you want to do
          </TellMe>
          <ShareButton>Share <Chev /></ShareButton>
        </TabBar>
      </Header>

      <RibbonBar />

      <FormulaBar>
        <NameBox>
          <NameInput aria-label="Name box" defaultValue="N10" />
          <Tri />
        </NameBox>
        <Dots />
        <FormulaButtons>
          <IconButton $on aria-label="Cancel"><Svg w={11} h={10} sw={1.6} stroke="#777"><path d="M1 0l9 10M10 0L1 10" /></Svg></IconButton>
          <IconButton $on aria-label="Confirm"><Svg w={12} h={10} sw={2} stroke="#777"><path d="M1 6l3.500 3L11 1" /></Svg></IconButton>
          <IconButton $on><FxLabel>fx</FxLabel></IconButton>
        </FormulaButtons>
        <FormulaField>
          <FormulaInput aria-label="Formula" defaultValue="A" />
          <Svg w={10} h={5} stroke="none"><path d="M5 0l4 4H1z" fill="#777" /></Svg>
        </FormulaField>
      </FormulaBar>

      <Workbook>
        <Pane>
          <ColumnHeads>
            <Corner><Svg w={9} h={9} stroke="none"><path d="M9 0v9H0z" fill="#b5b5b5" /></Svg></Corner>
            {COLUMNS.map(([name, w], i) => <ColumnHead key={i} $w={w} $on={name === "N"}>{name}</ColumnHead>)}
          </ColumnHeads>
          <Viewport>
            <RowHeads>
              {ROWS.map(([name, h], i) => <RowHead key={i} $h={h} $on={name === "10"}>{name}</RowHead>)}
            </RowHeads>
            <Sheet />
          </Viewport>
        </Pane>
        <VScroll>
          <ScrollButton aria-label="Scroll up"><Svg w={8} h={4} stroke="none"><path d="M4 0l4 4H0z" fill="#222" /></Svg></ScrollButton>
          <VThumb />
          <Fill />
          <ScrollButton aria-label="Scroll down"><Svg w={8} h={4} stroke="none"><path d="M0 0h8L4 4z" fill="#222" /></Svg></ScrollButton>
        </VScroll>
      </Workbook>

      <SheetBar>
        <SheetNav>
          <Svg w={8} h={8} stroke="none"><path d="M6 0v8L2 4z" fill="#c0c0c0" /></Svg>
          <Svg w={8} h={8} stroke="none"><path d="M2 0v8l4-4z" fill="#c0c0c0" /></Svg>
        </SheetNav>
        <SheetTab $w={59} $start>1770S</SheetTab>
        <SheetTab $w={70} $on>LAMP 1</SheetTab>
        <SheetTab $w={71} $end>LAMP 2</SheetTab>
        <SheetTab $w={137} $end>Perhitungan PH-MT</SheetTab>
        <IconButton $w={76} $on aria-label="New sheet"><Svg stroke="#888"><circle cx="8" cy="8" r="7" /><path d="M8 4.500v7M4.500 8h7" strokeWidth="1.600" /></Svg></IconButton>
        <Fill />
        <Dots $m="0 12px 0 0" />
        <HScroll>
          <ScrollButton aria-label="Scroll left"><Svg w={4} h={8} stroke="none"><path d="M4 0v8L0 4z" fill="#222" /></Svg></ScrollButton>
          <HThumb />
          <Fill />
          <ScrollButton aria-label="Scroll right"><Svg w={4} h={8} stroke="none"><path d="M0 0v8l4-4z" fill="#222" /></Svg></ScrollButton>
        </HScroll>
      </SheetBar>

      <StatusBar>
        <span>Enter</span>
        <Access>
          <Svg w={15} h={15} sw={1.3}><path d="M7 1.500A6 6 0 0 0 4 12" strokeDasharray="2.500 1.500" /><path d="M4 5l3 1h3l4-1M8 6v3l-3 5M9 9l2 1M9 8l6 6M15 9l-5 5" /><circle cx="9" cy="3" r="1.200" /></Svg>
          Accessibility: Investigate
        </Access>
        <Views>
          <Svg w={13} h={12} stroke="#777"><path d="M.5.5h12v11H.5zM4.500 0v12M8.500 0v12M0 4.500h13M0 8.500h13" /></Svg>
          <Svg w={13} h={12} stroke="#777"><path d="M.5.5h12v11H.5zM3.500 2.500h6v7h-6zM5 4.500h3M5 6.500h3" /></Svg>
          <Svg w={13} h={12} stroke="#777"><path d="M.5.5h12v11H.5zM4.500 0v7M8.500 0v7M4 7.500h5" /></Svg>
        </Views>
        <ZoomTool>
          <Svg w={8} h={8}><path d="M0 4.500h8" /></Svg>
          <Slider type="range" aria-label="Zoom" min="0" max="100" defaultValue="50" />
          <Svg w={8} h={8}><path d="M0 4.500h8M4.500 0v8" /></Svg>
          <Zoom>90%</Zoom>
        </ZoomTool>
      </StatusBar>

      <UniversityBadge />
      <BrandLogo />
    </Screen>
  );
}
